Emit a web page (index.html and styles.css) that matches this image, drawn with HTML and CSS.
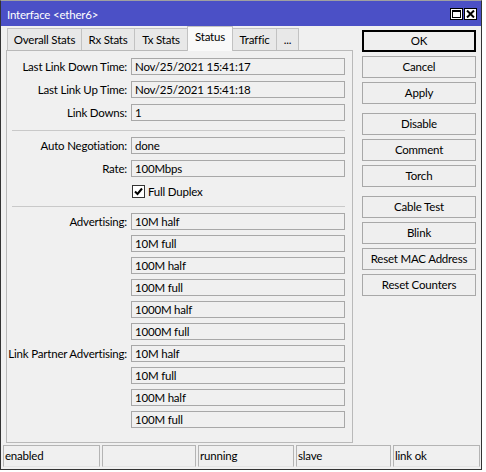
FILE: index.html
```html
<html lang="en">
<head>
    <meta charset="UTF-8">
    <title>Interface &lt;ether6&gt;</title>
    <link rel="stylesheet" href="styles.css">
</head>
<body>

    <div class="window">
        <div class="titlebar">
            <span class="title">Interface &lt;ether6&gt;</span>
            <div class="win-btns">
                <span class="win-btn"><svg width="9" height="8" viewBox="0 0 9 8"><rect x="0.5" y="0.5" width="8" height="7" fill="none" stroke="#000"/><line x1="0" y1="1.5" x2="9" y2="1.5" stroke="#000"/></svg></span>
                <span class="win-btn"><svg width="9" height="8" viewBox="0 0 9 8"><path d="M1 0.5 L8 7.5 M8 0.5 L1 7.5" stroke="#000" stroke-width="2"/></svg></span>
            </div>
        </div>

        <div class="main">
            <div class="left">
                <div class="tabs">
                    <div class="tab" style="width:75px">Overall Stats</div>
                    <div class="tab" style="width:54px">Rx Stats</div>
                    <div class="tab" style="width:54px">Tx Stats</div>
                    <div class="tab active" style="width:46px">Status</div>
                    <div class="tab" style="width:45px">Traffic</div>
                    <div class="tab" style="width:23px">...</div>
                </div>

                <div class="panel">
                    <div class="group">
                        <div class="row"><label>Last Link Down Time:</label><div class="field">Nov/25/2021 15:41:17</div></div>
                        <div class="row"><label>Last Link Up Time:</label><div class="field">Nov/25/2021 15:41:18</div></div>
                        <div class="row"><label>Link Downs:</label><div class="field">1</div></div>
                    </div>
                    <div class="sep"></div>
                    <div class="group">
                        <div class="row"><label>Auto Negotiation:</label><div class="field">done</div></div>
                        <div class="row"><label>Rate:</label><div class="field">100Mbps</div></div>
                        <div class="row"><label></label>
                            <span class="check"><svg width="9" height="9" viewBox="0 0 9 9"><path d="M1 4.5 L3.5 7 L8 1.5" fill="none" stroke="#000" stroke-width="2"/></svg></span>
                            <span class="check-text">Full Duplex</span>
                        </div>
                    </div>
                    <div class="sep second"></div>
                    <div class="group tight">
                        <div class="row"><label>Advertising:</label><div class="field">10M half</div></div>
                        <div class="row"><label></label><div class="field">10M full</div></div>
                        <div class="row"><label></label><div class="field">100M half</div></div>
                        <div class="row"><label></label><div class="field">100M full</div></div>
                        <div class="row"><label></label><div class="field">1000M half</div></div>
                        <div class="row"><label></label><div class="field">1000M full</div></div>
                        <div class="row"><label>Link Partner Advertising:</label><div class="field">10M half</div></div>
                        <div class="row"><label></label><div class="field">10M full</div></div>
                        <div class="row"><label></label><div class="field">100M half</div></div>
                        <div class="row"><label></label><div class="field">100M full</div></div>
                    </div>
                </div>
            </div>

            <div class="actions">
                <div class="btn default">OK</div>
                <div class="btn">Cancel</div>
                <div class="btn">Apply</div>
                <div class="btn gap">Disable</div>
                <div class="btn">Comment</div>
                <div class="btn">Torch</div>
                <div class="btn gap">Cable Test</div>
                <div class="btn">Blink</div>
                <div class="btn">Reset MAC Address</div>
                <div class="btn">Reset Counters</div>
            </div>
        </div>

        <div class="statusbar">
            <div class="seg" style="width:97px">enabled</div>
            <div class="seg" style="width:94px"></div>
            <div class="seg" style="width:96px">running</div>
            <div class="seg" style="width:95px">slave</div>
            <div class="seg" style="width:87px">link ok</div>
        </div>
    </div>

</body>
</html>
```

FILE: styles.css
```css
* {
    box-sizing: border-box;
    margin: 0;
    padding: 0;
}
body {
    background-color: white;
    font-family: Lato, "Liberation Sans", sans-serif;
    font-size: 11.5px;
    letter-spacing: -0.2px;
    color: black;
}
.window {
    display: flex;
    flex-direction: column;
    width: 482px;
    height: 470px;
    background-color: #f0f0f0;
    border: 1px solid #333;
    border-top-color: #a0a0a0;
    white-space: nowrap;
}

/* title bar */
.titlebar {
    display: flex;
    align-items: center;
    height: 25px;
    padding-left: 6px;
    background-color: #4b50c6;
    color: white;
}
.title {
    flex: 1;
    padding-top: 1px;
}
.win-btns {
    display: flex;
    gap: 1px;
    margin: 1px 4px 0 0;
}
.win-btn {
    display: flex;
    align-items: center;
    justify-content: center;
    width: 13px;
    height: 12px;
    background-color: white;
    border: 1px solid black;
}

.main {
    display: flex;
    flex: 1;
}
.left {
    display: flex;
    flex-direction: column;
    width: 347px;
    margin-left: 5px;
}

/* tabs */
.tabs {
    display: flex;
    align-items: flex-end;
    height: 24px;
    padding-left: 1px;
}
.tab {
    height: 22px;
    margin-right: -1px;
    line-height: 21px;
    text-align: center;
    background-color: #e8e8e8;
    border: 1px solid #c2c2c2;
    border-bottom: none;
}
.tab.active {
    position: relative;
    z-index: 1;
    height: 25px;
    margin-bottom: -1px;
    line-height: 20px;
    background-color: #f9f9f9;
}

.panel {
    padding: 7px 7px 14px 0;
    border: 1px solid #b9b9b9;
}
.row {
    display: flex;
    align-items: center;
    height: 17px;
}
.group .row + .row {
    margin-top: 6px;
}
.group.tight .row + .row {
    margin-top: 5px;
}
.row label {
    width: 124px;
    padding-right: 4px;
    text-align: right;
}
.field {
    width: 214px;
    height: 17px;
    padding-left: 3px;
    line-height: 15px;
    border: 1px solid #a8a8a8;
}
.sep {
    height: 1px;
    margin: 9px 0 6px 5px;
    background-color: #c9c9c9;
}
.sep.second {
    margin-top: 6px;
}
.check {
    display: flex;
    align-items: center;
    justify-content: center;
    width: 13px;
    height: 13px;
    margin-left: 1px;
    background-color: white;
    border: 1px solid #333;
}
.check-text {
    margin-left: 3px;
}

/* buttons on the right */
.actions {
    display: flex;
    flex-direction: column;
    width: 114px;
    margin: 4px 0 0 9px;
}
.btn {
    height: 22px;
    margin-top: 4px;
    line-height: 20px;
    text-align: center;
    background-color: #efefef;
    border: 1px solid #a8a8a8;
}
.btn.default {
    margin-top: 0;
    border: 2px solid black;
    line-height: 18px;
}
.btn.gap {
    margin-top: 9px;
}

/* status bar */
.statusbar {
    display: flex;
    gap: 2px;
    padding: 0 0 2px 2px;
}
.seg {
    height: 22px;
    padding-left: 1px;
    line-height: 20px;
    border: 1px solid #b4b4b4;
    border-bottom-color: #e4e4e4;
}
```
